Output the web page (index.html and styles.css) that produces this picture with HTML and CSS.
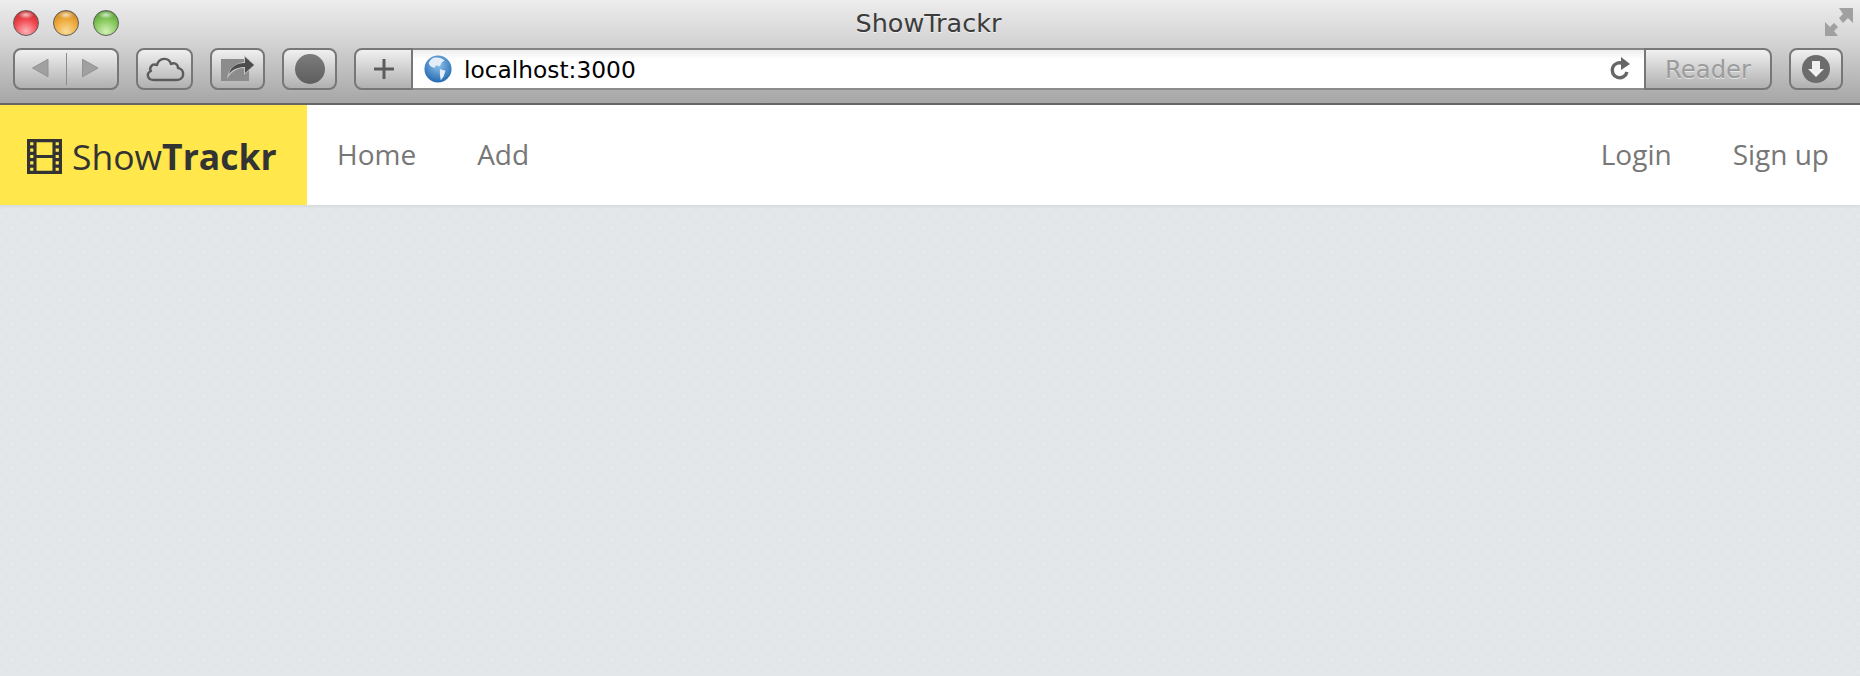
FILE: index.html

```html
<!DOCTYPE html>
<html lang="en">
  <head>
    <meta charset="UTF-8" />
    <title>ShowTrackr</title>
    <link rel="stylesheet" href="styles.css">
  </head>

  <body>
    <header class="chrome">
      <div class="titlebar">
        <div class="lights">
          <span class="light red"></span>
          <span class="light orange"></span>
          <span class="light green"></span>
        </div>
        <div class="title">ShowTrackr</div>
        <svg class="fullscreen" width="30" height="30" viewBox="0 0 30 30">
          <path d="M29 1v15l-5-5-5 5-4-5 4-4-4-6z" fill="#a0a0a0" />
          <path d="M1 29V15l5 5 4-4 4 4-4 4 4 5z" fill="#a0a0a0" />
        </svg>
      </div>
      <div class="toolbar">
        <div class="btn nav-pair">
          <svg width="52" height="42" viewBox="0 0 52 42"><path d="M34 11v18L18 20z" fill="#a0a0a0" stroke="#929292" /></svg>
          <span class="divider"></span>
          <svg width="52" height="42" viewBox="0 0 52 42"><path d="M17 11v18l16-9z" fill="#a0a0a0" stroke="#929292" /></svg>
        </div>
        <div class="btn cloud">
          <svg width="40" height="28" viewBox="0 0 40 28"><path d="M9 25h23c8 0 8-11 1-12 0-4-4-6-7-4-2-7-12-7-14 1-6-2-8 4-6 6-5 2-4 9 3 9z" fill="none" stroke="#5c5c5c" stroke-width="2.400" stroke-linejoin="round" /></svg>
        </div>
        <div class="btn share">
          <svg width="34" height="28" viewBox="0 0 34 28">
            <path d="M0 4h28v22H0z" fill="#8c8c8c" />
            <path d="M6 24c1-9 7-16 17-17V0l11 10-11 10v-7c-7 0-13 4-17 11z" fill="#c4c4c4" />
            <path d="M8 19c2-7 7-11 16-11V2l9 8-9 8v-6c-7 0-12 2-16 7z" fill="#4c4c4c" />
          </svg>
        </div>
        <div class="btn record"><span class="dot"></span></div>
        <div class="address-group">
          <div class="btn plus">
            <svg width="22" height="22" viewBox="0 0 22 22"><path d="M9.500 1h3v8.500H21v3h-8.500V21h-3v-8.500H1v-3h8.500z" fill="#5c5c5c" /></svg>
          </div>
          <div class="address">
            <svg class="globe" width="28" height="28" viewBox="0 0 30 30">
              <defs>
                <radialGradient id="sea" cx="50%" cy="35%" r="70%">
                  <stop offset="0" stop-color="#8fc3ec" />
                  <stop offset="1" stop-color="#1c62ad" />
                </radialGradient>
              </defs>
              <circle cx="15" cy="15" r="14.500" fill="url(#sea)" />
              <path d="M10 3c5-1 9 0 12 3l-3 2-2 4-4-1-2 3-4-2-2-3c1-3 3-5 5-6zM17 15l6 2-2 6-3 4-1-6z" fill="#e4eef8" />
            </svg>
            <span class="url">localhost:3000</span>
            <svg class="reload" width="22" height="24" viewBox="0 0 22 24">
              <path d="M18 15a7.500 7.500 0 1 1-4-8.500" fill="none" stroke="#666" stroke-width="3.400" />
              <path d="M12 0l9 7-9 6z" fill="#666" />
            </svg>
          </div>
          <div class="btn reader">Reader</div>
        </div>
        <div class="btn download">
          <svg width="30" height="30" viewBox="0 0 30 30">
            <circle cx="15" cy="15" r="14" fill="#6c6c6c" />
            <path d="M11 7h8v8h4l-8 8-8-8h4z" fill="#f0f0f0" />
          </svg>
        </div>
      </div>
    </header>

    <nav class="navbar">
      <a class="brand">
        <svg class="film" width="35" height="35" viewBox="0 0 33 33">
          <path fill-rule="evenodd" fill="#333" d="M0 0h33v33H0zM3 3v3h3V3zM3 9v3h3V9zM3 15v3h3v-3zM3 21v3h3v-3zM3 27v3h3v-3zM27 3v3h3V3zM27 9v3h3V9zM27 15v3h3v-3zM27 21v3h3v-3zM27 27v3h3v-3zM9 3v12h15V3zM9 18v12h15V18z" />
        </svg>
        <span>Show<b>Trackr</b></span>
      </a>
      <ul class="links">
        <li>Home</li>
        <li>Add</li>
      </ul>
      <ul class="links right">
        <li>Login</li>
        <li>Sign up</li>
      </ul>
    </nav>
  </body>
</html>
```

FILE: styles.css

```css
html, body {
  height: 100%;
}
body {
  margin: 0;
  background-color: #e3e6e9;
  background-image: radial-gradient(#e8ebee 1px, transparent 1.500px), radial-gradient(#e8ebee 1px, transparent 1.500px);
  background-size: 12px 12px;
  background-position: 0 0, 6px 6px;
  font-family: 'Open Sans', sans-serif;
  overflow: hidden;
}

.chrome {
  height: 105px;
  box-sizing: border-box;
  border-bottom: 2px solid #666;
  background: linear-gradient(#ededed, #d4d4d4 40%, #a6a6a6);
  font-family: 'DejaVu Sans', sans-serif;
}
.titlebar {
  height: 46px;
  display: flex;
  align-items: center;
  justify-content: space-between;
  padding: 0 6px 0 13px;
}
.lights {
  display: flex;
  gap: 14px;
  width: 200px;
}
.light {
  width: 24px;
  height: 24px;
  border-radius: 50%;
  border: 1px solid #5c5c5c;
}
.red {
  background: radial-gradient(ellipse 8px 4px at 50% 16%, rgba(255, 255, 255, 0.7), transparent), radial-gradient(circle at 50% 85%, #ffb3b8, #f0494f 50%, #b81a20);
}
.orange {
  background: radial-gradient(ellipse 8px 4px at 50% 16%, rgba(255, 255, 255, 0.7), transparent), radial-gradient(circle at 50% 85%, #f9dd9a, #eeaa3b 50%, #b9761a);
}
.green {
  background: radial-gradient(ellipse 8px 4px at 50% 16%, rgba(255, 255, 255, 0.7), transparent), radial-gradient(circle at 50% 85%, #d4f0b8, #85c85a 50%, #458c26);
}
.title {
  font-size: 25.500px;
  color: #3c3c3c;
  text-shadow: 0 1px 0 #f2f2f2;
  margin-left: -180px;
}
.fullscreen {
  margin-top: -2px;
}

.toolbar {
  display: flex;
  align-items: flex-start;
  gap: 17px;
  padding: 2px 17px 0 13px;
}
.btn {
  height: 42px;
  box-sizing: border-box;
  display: flex;
  align-items: center;
  justify-content: center;
  border: 2px solid #777;
  border-radius: 8px;
  background: linear-gradient(#f0f0f0, #b0b0b0);
}
.nav-pair {
  width: 106px;
}
.divider {
  width: 1px;
  height: 32px;
  background: #8c8c8c;
}
.cloud {
  width: 57px;
}
.share {
  width: 55px;
}
.record {
  width: 55px;
}
.dot {
  width: 30px;
  height: 30px;
  border-radius: 50%;
  background: linear-gradient(#7c7c7c, #5e5e5e);
}
.address-group {
  flex: 1;
  display: flex;
}
.plus {
  width: 59px;
  border-radius: 8px 0 0 8px;
}
.address {
  flex: 1;
  height: 42px;
  box-sizing: border-box;
  display: flex;
  align-items: center;
  padding: 0 13px 0 11px;
  background: linear-gradient(#eee, #fff 25%);
  border-top: 2px solid #858585;
  border-bottom: 2px solid #8c8c8c;
}
.url {
  flex: 1;
  margin-left: 12px;
  font-size: 23.300px;
  color: #000;
}
.reader {
  width: 128px;
  border-radius: 0 8px 8px 0;
  font-size: 24.300px;
  color: #9c9c9c;
  text-shadow: 0 1px 0 #e6e6e6;
}
.download {
  width: 54px;
}

.navbar {
  height: 100px;
  display: flex;
  background: #fff;
  box-shadow: 0 2px 2px #d9dcdf;
  font-size: 28px;
}
.brand {
  width: 307px;
  display: flex;
  align-items: center;
  gap: 10px;
  padding-left: 27px;
  box-sizing: border-box;
  background: #ffe74c;
  color: #333;
  font-size: 35.500px;
}
.film {
  margin-top: 3px;
}
.brand span {
  padding-top: 2px;
}
.links {
  display: flex;
  gap: 61px;
  list-style: none;
  margin: 0;
  padding: 0 0 2px 30px;
  align-items: center;
  color: #777;
}
.right {
  margin-left: auto;
  padding: 0 31px 2px 0;
}
```
